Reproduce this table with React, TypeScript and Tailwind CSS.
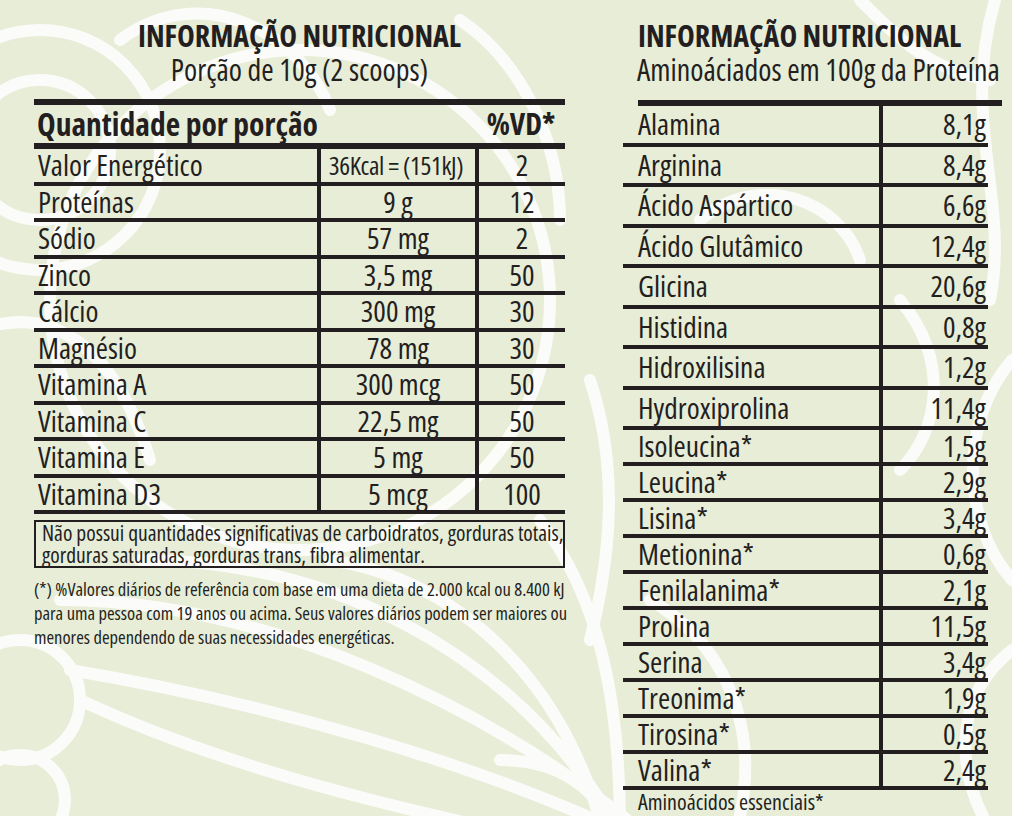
import React from "react";

const leftRows: [string, string, string][] = [
  ["Valor Energético", "36Kcal = (151kJ)", "2"],
  ["Proteínas", "9 g", "12"],
  ["Sódio", "57 mg", "2"],
  ["Zinco", "3,5 mg", "50"],
  ["Cálcio", "300 mg", "30"],
  ["Magnésio", "78 mg", "30"],
  ["Vitamina A", "300 mcg", "50"],
  ["Vitamina C", "22,5 mg", "50"],
  ["Vitamina E", "5 mg", "50"],
  ["Vitamina D3", "5 mcg", "100"],
];

const rightRows: [string, string][] = [
  ["Alamina", "8,1g"],
  ["Arginina", "8,4g"],
  ["Ácido Aspártico", "6,6g"],
  ["Ácido Glutâmico", "12,4g"],
  ["Glicina", "20,6g"],
  ["Histidina", "0,8g"],
  ["Hidroxilisina", "1,2g"],
  ["Hydroxiprolina", "11,4g"],
  ["Isoleucina*", "1,5g"],
  ["Leucina*", "2,9g"],
  ["Lisina*", "3,4g"],
  ["Metionina*", "0,6g"],
  ["Fenilalanima*", "2,1g"],
  ["Prolina", "11,5g"],
  ["Serina", "3,4g"],
  ["Treonima*", "1,9g"],
  ["Tirosina*", "0,5g"],
  ["Valina*", "2,4g"],
];

function Background() {
  return (
    <svg
      className="absolute inset-0 h-full w-full"
      viewBox="0 0 1012 816"
      fill="none"
      stroke="#ffffff"
      strokeLinecap="round"
    >
      <g strokeWidth="12" opacity="0.85">
        <circle cx="40" cy="150" r="120" />
        <circle cx="40" cy="150" r="70" />
        <path d="M-20 330 C 60 300, 120 360, 150 460" />
        <circle cx="300" cy="300" r="250" />
        <path d="M120 40 C 200 -20, 300 30, 330 110" />
        <path d="M460 20 C 520 60, 560 140, 560 220" />
        <circle cx="20" cy="700" r="60" />
        <circle cx="20" cy="800" r="45" />
        <path d="M80 700 C 250 780, 450 820, 640 860" />
        <path d="M70 670 C 250 700, 480 760, 660 850" />
        <path d="M60 600 C 260 600, 480 700, 640 830" />
        <path d="M140 560 C 330 560, 500 650, 600 800" />
        <path d="M330 560 C 460 580, 560 680, 600 820" />
        <path d="M540 520 C 600 600, 620 700, 620 830" />
        <path d="M500 760 C 560 760, 600 790, 610 830" />
        <path d="M995 0 C 960 120, 1010 200, 990 300" />
        <path d="M1012 360 C 960 420, 960 520, 1012 580" />
        <path d="M1012 650 C 960 690, 950 760, 990 830" />
        <path d="M590 380 C 620 470, 610 560, 590 640" />
        <path d="M860 0 C 900 40, 930 70, 990 80" />
        <path d="M700 220 C 760 170, 840 200, 860 260" />
        <path d="M900 300 C 950 360, 940 430, 900 470" />
        <path d="M650 600 C 720 640, 760 720, 740 816" />
      </g>
    </svg>
  );
}

export default function App() {
  return (
    <div className="relative h-[816px] w-[1012px] overflow-hidden bg-[#e8edd8] font-['Open_Sans',sans-serif] text-[#231f20] [font-stretch:75%]">
      <Background />
      <div className="relative flex">
        {/* LEFT PANEL */}
        <div className="ml-[34px] w-[531px] pt-[19px]">
          <div className="text-center text-[30px] font-bold leading-[34px]">INFORMAÇÃO NUTRICIONAL</div>
          <div className="text-center text-[30px] leading-[34px]">Porção de 10g (2 scoops)</div>
          <div className="mt-[12px] h-[6px] bg-[#231f20]" />
          <div className="flex h-[38px] items-center">
            <div className="w-[441px] pl-[3px] text-[31.5px] font-bold leading-[34px]">Quantidade por porção</div>
            <div className="flex-1 pl-[2px] text-center text-[30px] font-bold leading-[34px]">%VD*</div>
          </div>
          <div className="h-[6px] bg-[#231f20]" />
          {leftRows.map(([n, q, v]) => (
            <div key={n} className="flex h-[36.5px] border-b-4 border-[#231f20]">
              <div className="flex w-[283px] items-center pl-[4px] text-[29.5px] leading-[30px]">{n}</div>
              <div className="flex w-[158px] items-center justify-center border-l-4 border-[#231f20] text-[29.5px] leading-[30px]">
                {n === "Valor Energético" ? (
                  <span className="mr-[4px] whitespace-nowrap text-[25.5px] tracking-[-0.015em]">{q}</span>
                ) : (
                  q
                )}
              </div>
              <div className="flex flex-1 items-center justify-center border-l-4 border-[#231f20] text-[29.5px] leading-[30px]">
                {v}
              </div>
            </div>
          ))}
          <div className="mt-[6px] whitespace-nowrap border-2 border-[#231f20] px-[6px] text-[21.5px] leading-[22px]">
            Não possui quantidades significativas de carboidratos, gorduras totais,
            <br />
            gorduras saturadas, gorduras trans, fibra alimentar.
          </div>
          <div className="mt-[9px] whitespace-nowrap text-[18.5px] leading-[24px]">
            (*) %Valores diários de referência com base em uma dieta de 2.000 kcal ou 8.400 kJ
            <br />
            para uma pessoa com 19 anos ou acima. Seus valores diários podem ser maiores ou
            <br />
            menores dependendo de suas necessidades energéticas.
          </div>
        </div>

        {/* RIGHT PANEL */}
        <div className="ml-[58px] w-[379px] pt-[19px]">
          <div className="pl-[15px] text-[30px] font-bold leading-[34px]">INFORMAÇÃO NUTRICIONAL</div>
          <div className="whitespace-nowrap pl-[14px] text-[30px] leading-[34px]">Aminoáciados em 100g da Proteína</div>
          <div className="ml-[15px] mt-[13px] h-[6px] w-[364px] bg-[#231f20]" />
          <div className="w-[365px]">
            {rightRows.map(([n, v], i) => (
              <div
                key={n}
                className={
                  "flex border-b-4 border-[#231f20] " + (i < 8 ? "h-[40.5px]" : "h-[36px]")
                }
              >
                <div className="flex w-[256px] items-center pl-[15px] text-[29.5px] leading-[30px]">{n}</div>
                <div className="flex flex-1 items-center justify-end border-l-4 border-[#231f20] pr-[2px] text-[29.5px] leading-[30px]">
                  {v}
                </div>
              </div>
            ))}
          </div>
          <div className="pl-[15px] text-[22px] leading-[22px]">Aminoácidos essenciais*</div>
        </div>
      </div>
    </div>
  );
}
